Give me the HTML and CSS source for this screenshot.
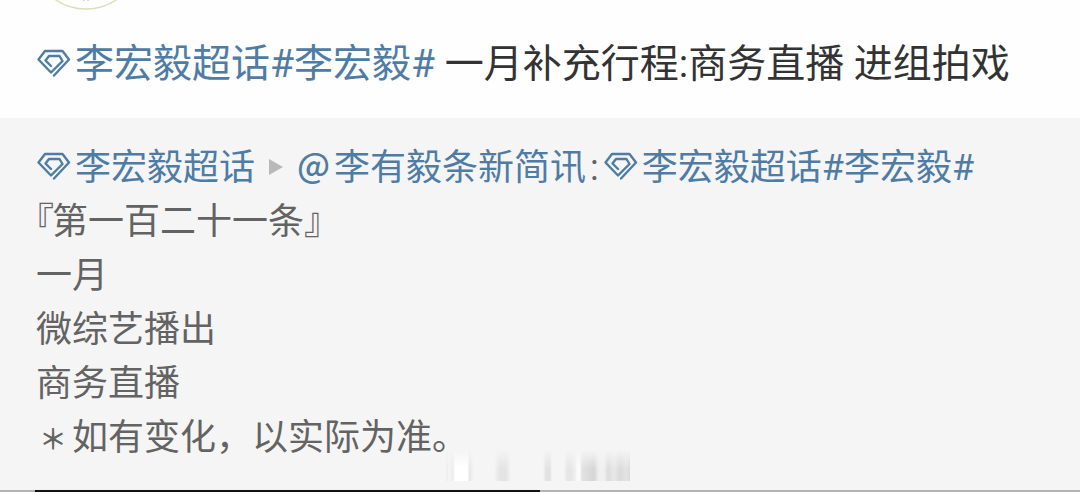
FILE: index.html
```html
<!DOCTYPE html>
<html lang="zh-CN">
<head>
<meta charset="utf-8">
<title>微博</title>
<link rel="stylesheet" href="styles.css">
</head>
<body>
<svg class="symbols" aria-hidden="true">
  <symbol id="gem" viewBox="0 0 34 28">
    <path d="M17 26.500 32 10.500 25.500 2H8L1.500 10.500 14 23.500 25.500 12 22.500 7H12L8.500 11.500 14 17" fill="none" stroke="currentColor" stroke-width="2.400" stroke-linejoin="round" stroke-linecap="round"/>
  </symbol>
</svg>
<article class="post">
  <header class="post-head">
    <svg class="avatar" viewBox="0 0 108 10" aria-hidden="true">
      <circle cx="54" cy="-45" r="54" fill="#fff" stroke="#dcdfbd" stroke-width="1.500"/>
      <path d="M51 0h2M55 0h2" stroke="#b9b4d8" stroke-width="1"/>
    </svg>
  </header>
  <p class="post-text"><a class="link" href="#topic"><svg class="gem" aria-hidden="true"><use href="#gem"/></svg>李宏毅超话</a><a class="link" href="#tag">#李宏毅#</a> 一月补充行程:商务直播 进组拍戏</p>
  <section class="repost">
    <p class="repost-text"><a class="link" href="#topic"><svg class="gem" aria-hidden="true"><use href="#gem"/></svg>李宏毅超话</a><svg class="arrow" viewBox="0 0 14 16" aria-hidden="true"><path d="M0 0 14 8 0 16Z" fill="#b9b9b9"/></svg><a class="link" href="#user"><span class="at">@</span>李有毅条新简讯</a><span class="colon">:</span><a class="link" href="#topic"><svg class="gem" aria-hidden="true"><use href="#gem"/></svg>李宏毅超话</a><a class="link" href="#tag">#李宏毅#</a><br>
    <span class="half">『</span>第一百二十一条<span class="half">』</span><br>
    一月<br>
    微综艺播出<br>
    商务直播<br>
    <span class="star">＊</span>如有变化，以实际为准。</p>
    <div class="smudge" aria-hidden="true"></div>
  </section>
  <div class="media-edge"></div>
</article>
</body>
</html>
```
FILE: styles.css
```css
* {
  box-sizing: border-box;
}

body {
  margin: 0;
  background: #fefefe;
  font-family: Roboto, "Noto Sans CJK SC", sans-serif;
}

.symbols {
  position: absolute;
  width: 0;
  height: 0;
}

.post {
  display: flex;
  flex-direction: column;
  min-height: 100vh;
}

.post-head {
  display: flex;
  padding-left: 32px;
}

.avatar {
  width: 108px;
  height: 10px;
}

.post-text,
.repost-text {
  margin: 0;
  padding: 0 36px;
}

.post-text {
  padding-top: 26px;
  padding-bottom: 26px;
  font-size: 39px;
  line-height: 56px;
  color: #333;
}

.repost {
  position: relative;
  flex: 1;
  padding: 23px 0 0;
  background: #f5f5f5;
}

.repost-text {
  font-size: 36px;
  line-height: 54px;
  color: #636363;
}

.link {
  color: #4f7ca4;
  text-decoration: none;
}

.gem {
  width: 34px;
  height: 28px;
  margin: 0 4px 0 1px;
}

.arrow {
  width: 14px;
  height: 16px;
  margin: 0 14px;
  vertical-align: 5px;
}

.at {
  margin-right: 4px;
  font-family: "Noto Sans CJK SC", sans-serif;
  font-size: 34px;
  font-weight: 500;
  line-height: 1;
  vertical-align: 2px;
}

.colon {
  margin: 0 4px;
}

.half {
  margin-right: -2px;
  font-feature-settings: "halt";
}

.star {
  display: inline-block;
  width: 34px;
  margin-right: 2px;
  font-size: 28px;
  font-weight: 500;
  line-height: 1;
  text-align: center;
}

.smudge {
  position: absolute;
  left: 446px;
  bottom: 9px;
  width: 184px;
  height: 31px;
  background: linear-gradient(90deg, #ededed 0 1px, #f5f5f5 3px, #ececec 7px, #fff 9px 22px, #e6e6e6 23px, #f5f5f5 28px 48px, #e4e4e4 54px 60px, #f5f5f5 65px 97px, #e2e2e2 100px 104px, #f5f5f5 106px 118px, #e6e6e6 121px 125px, #eee 129px, #fafafa 131px 134px, #e2e2e2 136px, #d6d6d6 148px, #f0f0f0 153px 158px, #dcdcdc 162px, #e8e8e8 168px, #dadada 174px, #e3e3e3 180px, #dcdcdc);
  mask-image: linear-gradient(transparent, #000 60%);
}

.media-edge {
  height: 2px;
  background: linear-gradient(90deg, #b5b5b5 35px, #111 35px 50%, #b5b5b5 50%);
}
```
